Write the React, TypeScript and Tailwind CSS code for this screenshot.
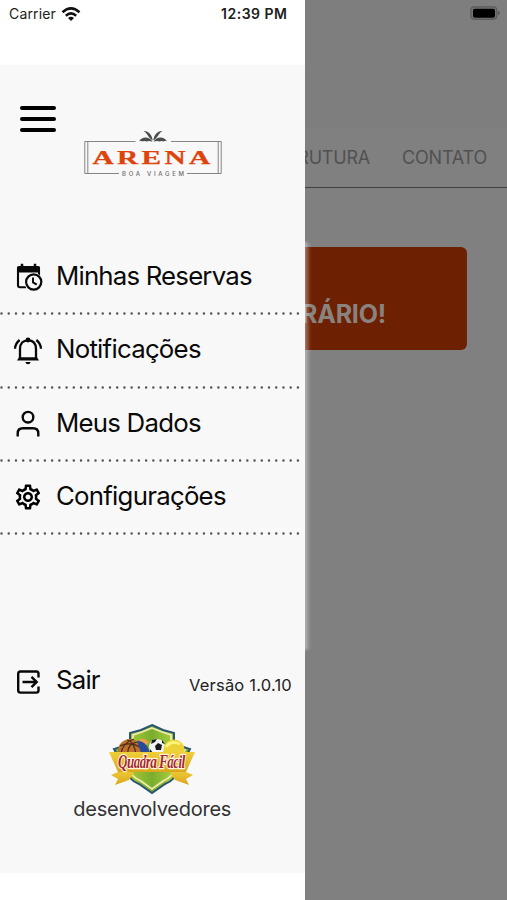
import type { ReactNode } from 'react';
import { MdOutlineSettings } from 'react-icons/md';

function CalendarClock() {
  return (
    <svg viewBox="0 0 28 28" className="h-7 w-7 overflow-visible" fill="none" stroke="#080808">
      <path d="M12 24.200H6q-2 0-2-2V5.500Q4 4 6 4h17q2 0 2 1.500V13" strokeWidth="2.100" />
      <path d="M3 5q0-2 2-2h19q2 0 2 2v4.500H3z" fill="#080808" stroke="none" />
      <path d="M8 .7v4M21 .7v4" strokeWidth="2.500" />
      <circle cx="19.700" cy="19" r="9.300" fill="#f8f8f8" stroke="none" />
      <circle cx="19.700" cy="19" r="7.600" fill="#f8f8f8" strokeWidth="2.200" />
      <path d="M19 14.500v4.900l3.800 2.200" strokeWidth="1.900" />
    </svg>
  );
}

function BellRing() {
  return (
    <svg viewBox="0 0 28 28" className="h-7 w-7 overflow-visible" fill="none" stroke="#080808">
      <path d="M6 22.500V13C6 7.500 9 4.300 14 4.300s8 3.200 8 8.700v9.500" strokeWidth="2.300" />
      <path d="M5 21.300h18l2 3.200H3z" fill="#080808" stroke="none" />
      <path d="M11.300 26h5.400q-.6 2.200-2.700 2.200T11.300 26z" fill="#080808" stroke="none" />
      <circle cx="14" cy="4" r="2.400" fill="#080808" stroke="none" />
      <path d="M1 12.800Q1.300 7.500 5.600 4M27 12.800Q26.700 7.500 22.400 4" strokeWidth="2.300" />
    </svg>
  );
}

function Person() {
  return (
    <svg viewBox="0 0 28 28" className="h-7 w-7" fill="none" stroke="#080808" strokeWidth="2.400">
      <circle cx="14" cy="7.200" r="5.300" />
      <path d="M3.700 26.500v-3q0-5.200 5.200-5.200h10.200q5.200 0 5.200 5.200v3" />
    </svg>
  );
}

function Exit() {
  return (
    <svg viewBox="0 0 28 28" className="h-7 w-7" fill="none" stroke="#080808" strokeWidth="2.400">
      <path d="M24.500 9.500V5.500q0-2-2-2h-16q-2.300 0-2.300 2.300v16.500q0 2.300 2.300 2.300h16q2 0 2-2V18.500" />
      <path d="M8.500 14h14M17.500 8.800l5.200 5.200-5.200 5.200" />
    </svg>
  );
}

function ArenaLogo() {
  return (
    <svg viewBox="0 0 138 48" className="h-12 w-[138px] overflow-visible">
      <g fill="none" stroke="#858585" strokeWidth="1">
        <path d="M51.500 11.500H.8V43.500H35M87 11.500h50.200v32H103" />
        <path d="M3.800 11.500v32M134.200 11.500v32" />
      </g>
      <g fill="#4a4d4e">
        <path d="M68.800 10.500C68 5 64.500.500 59.500 1q2 .7 3.500 3.200c1.500 2.500 3 4.500 5.800 6.300z" />
        <path d="M69.200 10.500C70 5 73.500.500 78.500 1q-2 .7-3.500 3.200c-1.500 2.500-3 4.500-5.800 6.300z" />
        <path d="M68.500 11.700C65 6.200 58 6.500 55 11.200q1.800-.8 3.200.2 2.500-1 4.300.2 2.500-1 6 .1z" />
        <path d="M69.500 11.700C73 6.200 80 6.500 83 11.200q-1.800-.8-3.200.2-2.500-1-4.300.2-2.500-1-6 .1z" />
      </g>
      <text x="8.500" y="34" textLength="121" lengthAdjust="spacingAndGlyphs" fontSize="19.500" fontWeight="700" fill="#de430c" stroke="#de430c" strokeWidth=".25" fontFamily="Liberation Serif, serif" letterSpacing="2.200">ARENA</text>
      <text x="38" y="45.500" textLength="62" fontSize="6" fontWeight="500" fill="#6d6d6d" fontFamily="Inter, sans-serif">BOA VIAGEM</text>
    </svg>
  );
}

function QuadraLogo() {
  return (
    <svg viewBox="0 0 86 72" className="h-[72px] w-[86px] overflow-visible">
      <defs>
        <linearGradient id="grass">
          <stop offset="0" stopColor="#73a82d" />
          <stop offset=".25" stopColor="#a1c537" />
          <stop offset=".5" stopColor="#79ad2e" />
          <stop offset=".75" stopColor="#a6cb3b" />
          <stop offset="1" stopColor="#76aa2d" />
        </linearGradient>
        <linearGradient id="gold" x2="0" y2="1">
          <stop stopColor="#efcf38" />
          <stop offset="1" stopColor="#dba61d" />
        </linearGradient>
      </defs>
      <path d="M43 2 54 7 65 10V21L81 26 71 44Q67 57 56 61L43 70 30 61Q19 57 15 44L5 26 21 21V10L32 7z" fill="url(#grass)" stroke="#2c5670" strokeWidth="2" />
      <path d="M43 5 53 9 62 12V24L76 27 68 43Q64 54 54 58L43 66 32 58Q22 54 18 43L10 27 24 24V12L33 9z" fill="none" stroke="#f0eab0" strokeWidth="1.800" />
      <path d="M2 52 16 46 25 50 20 57 6 62 9 56zM84 52 70 46 61 50 66 57 80 62 77 56z" fill="url(#gold)" />
      <circle cx="21" cy="28" r="12" fill="#bd712c" />
      <path d="M12 31Q13 20 25 16M19 31q-1-10 9-12M27 31q-2-13-9-14M11 23q11-5 21 2" fill="none" stroke="#4a2b1c" strokeWidth="1.200" />
      <path d="M28 18q8-3 13 12h-9z" fill="#294a96" />
      <path d="M29 18q5-5 11 1l-3 3q-3-4-8-4z" fill="#f1a04a" />
      <circle cx="48" cy="24" r="8" fill="#f3f3f1" />
      <path d="m49 20 4 2-1 5h-5l-1-4zM43 17l5-1-2 3-4 2zM53 17l3 4-3-1zM41 26l3 4-3-1z" fill="#171a1d" />
      <ellipse cx="65" cy="27" rx="10.500" ry="10.500" fill="#edd237" />
      <path d="M57 24q5-7 14-3" fill="none" stroke="#fff379" strokeWidth="3" />
      <path d="M0 29H86L77 49H9z" fill="url(#gold)" />
      <g transform="translate(9 45) scale(.79 1.050)">
        <text fontFamily="Liberation Serif, serif" fontSize="17" fontWeight="700" fontStyle="italic" fill="#a32534" stroke="#fff5dc" strokeWidth="2.200" paintOrder="stroke" textLength="85">Quadra Fácil</text>
      </g>
    </svg>
  );
}

function Dots() {
  return (
    <svg className="block h-[3px] w-[302px]">
      <path d="M1.500 1.500H302" fill="none" stroke="#555" strokeWidth="2.500" strokeLinecap="round" strokeDasharray="0 7.230" />
    </svg>
  );
}

function MenuText({ label, width }: { label: string; width: number }) {
  return (
    <svg className="ml-3.5 h-9 w-[230px]">
      <text x="0" y="26.800" fontSize="25.800" fontFamily="Inter, sans-serif" fill="#0a0a0a" textLength={width}>{label}</text>
    </svg>
  );
}

function Item({ icon, label, width }: { icon: ReactNode; label: string; width: number }) {
  return (
    <div className="flex h-[73.300px] flex-col justify-end">
      <div className="flex flex-1 items-center pb-0.5 pl-3.5">
        <div className="mt-0.5 flex w-7 shrink-0 justify-center">{icon}</div>
        <MenuText label={label} width={width} />
      </div>
      <Dots />
    </div>
  );
}

export default function App() {
  return (
    <div className='relative h-[900px] w-[507px] overflow-hidden bg-[#808080] font-["Inter","Liberation_Sans",sans-serif]'>
      <main className="flex h-full flex-col">
        <div className="flex h-32 justify-end bg-[#7e7e7e] pt-1.5 pr-1.5">
          <svg className="h-4 w-[31px]" viewBox="0 0 31 16">
            <rect x=".8" y=".8" width="26" height="12.500" rx="3.500" fill="#737373" stroke="#5b5b5b" strokeWidth="1.200" />
            <rect x="3" y="2.700" width="22" height="9" rx="1.800" />
            <path d="M28 4.700q4 2.300 0 4.600z" fill="#5b5b5b" />
          </svg>
        </div>
        <nav className="flex h-[60px] items-center justify-end border-b border-[#404040] pr-5 text-[18px] text-[#515151]">
          <span className="mr-8 tracking-[-0.2px]">ESTRUTURA</span>
          <span className="tracking-[-0.2px]">CONTATO</span>
        </nav>
        <div className="mt-[59px] ml-10 flex h-[103px] w-[427px] flex-col justify-end rounded-md bg-[#6e2003] pb-[17px] text-[25px] leading-[38px] font-bold text-[#898380]">
          <span className="pr-[81px] text-right tracking-[-0.2px]">HORÁRIO!</span>
        </div>
      </main>

      <div className="absolute top-[242px] left-[302px] h-[408px] w-2 rounded-r bg-linear-to-r from-white/60 to-white/5 blur-[1.500px]" />
      <aside className="absolute inset-y-0 left-0 flex w-[304.500px] flex-col bg-white">
        <header className="flex h-[65px] shrink-0 items-start justify-between pt-[5px] pr-[17px] pl-[9px] text-[14px] leading-[18px] text-[#202020]">
          <div className="flex items-center gap-[5px]">
            <span className="tracking-[0.150px]">Carrier</span>
            <svg viewBox="0 0 20 15" className="h-[15px] w-5" fill="none" stroke="#111" strokeWidth="2.500">
              <path d="M1.500 5.200Q10-2.500 18.500 5.200M4.800 8.700q5.200-4.600 10.400 0" />
              <path d="M7 11q3-2.400 6 0l-3 3z" fill="#111" stroke="none" />
            </svg>
          </div>
          <span className="font-semibold tracking-[0.500px]">12:39 PM</span>
        </header>
        <section className="flex h-[808px] shrink-0 flex-col bg-[#f8f8f8]">
          <div className="flex h-[177px] shrink-0 items-start pl-5">
            <div className="mt-[41px] flex w-9 flex-col gap-[7px]">
              <span className="h-1 rounded-full bg-black" />
              <span className="h-1 rounded-full bg-black" />
              <span className="h-1 rounded-full bg-black" />
            </div>
            <div className="mt-[64.500px] ml-7"><ArenaLogo /></div>
          </div>
          <Item icon={<CalendarClock />} label="Minhas Reservas" width={196.5} />
          <Item icon={<BellRing />} label="Notificações" width={145.5} />
          <Item icon={<Person />} label="Meus Dados" width={145.5} />
          <Item icon={<MdOutlineSettings size={30} className="shrink-0" />} label="Configurações" width={170.5} />
          <div className="mt-[125px] flex h-10 items-center pl-3.5">
            <div className="mt-1"><Exit /></div>
            <div className="w-[130px]"><MenuText label="Sair" width={44.5} /></div>
            <span className="mt-2.5 ml-[17px] text-[16.500px] tracking-[0.200px] whitespace-nowrap text-[#222]">Versão 1.0.10</span>
          </div>
          <div className="mt-[23px] flex flex-col items-center">
            <QuadraLogo />
            <span className="mt-px text-[20px] leading-[26px] tracking-[-0.250px] text-[#333]">desenvolvedores</span>
          </div>
        </section>
      </aside>
    </div>
  );
}
